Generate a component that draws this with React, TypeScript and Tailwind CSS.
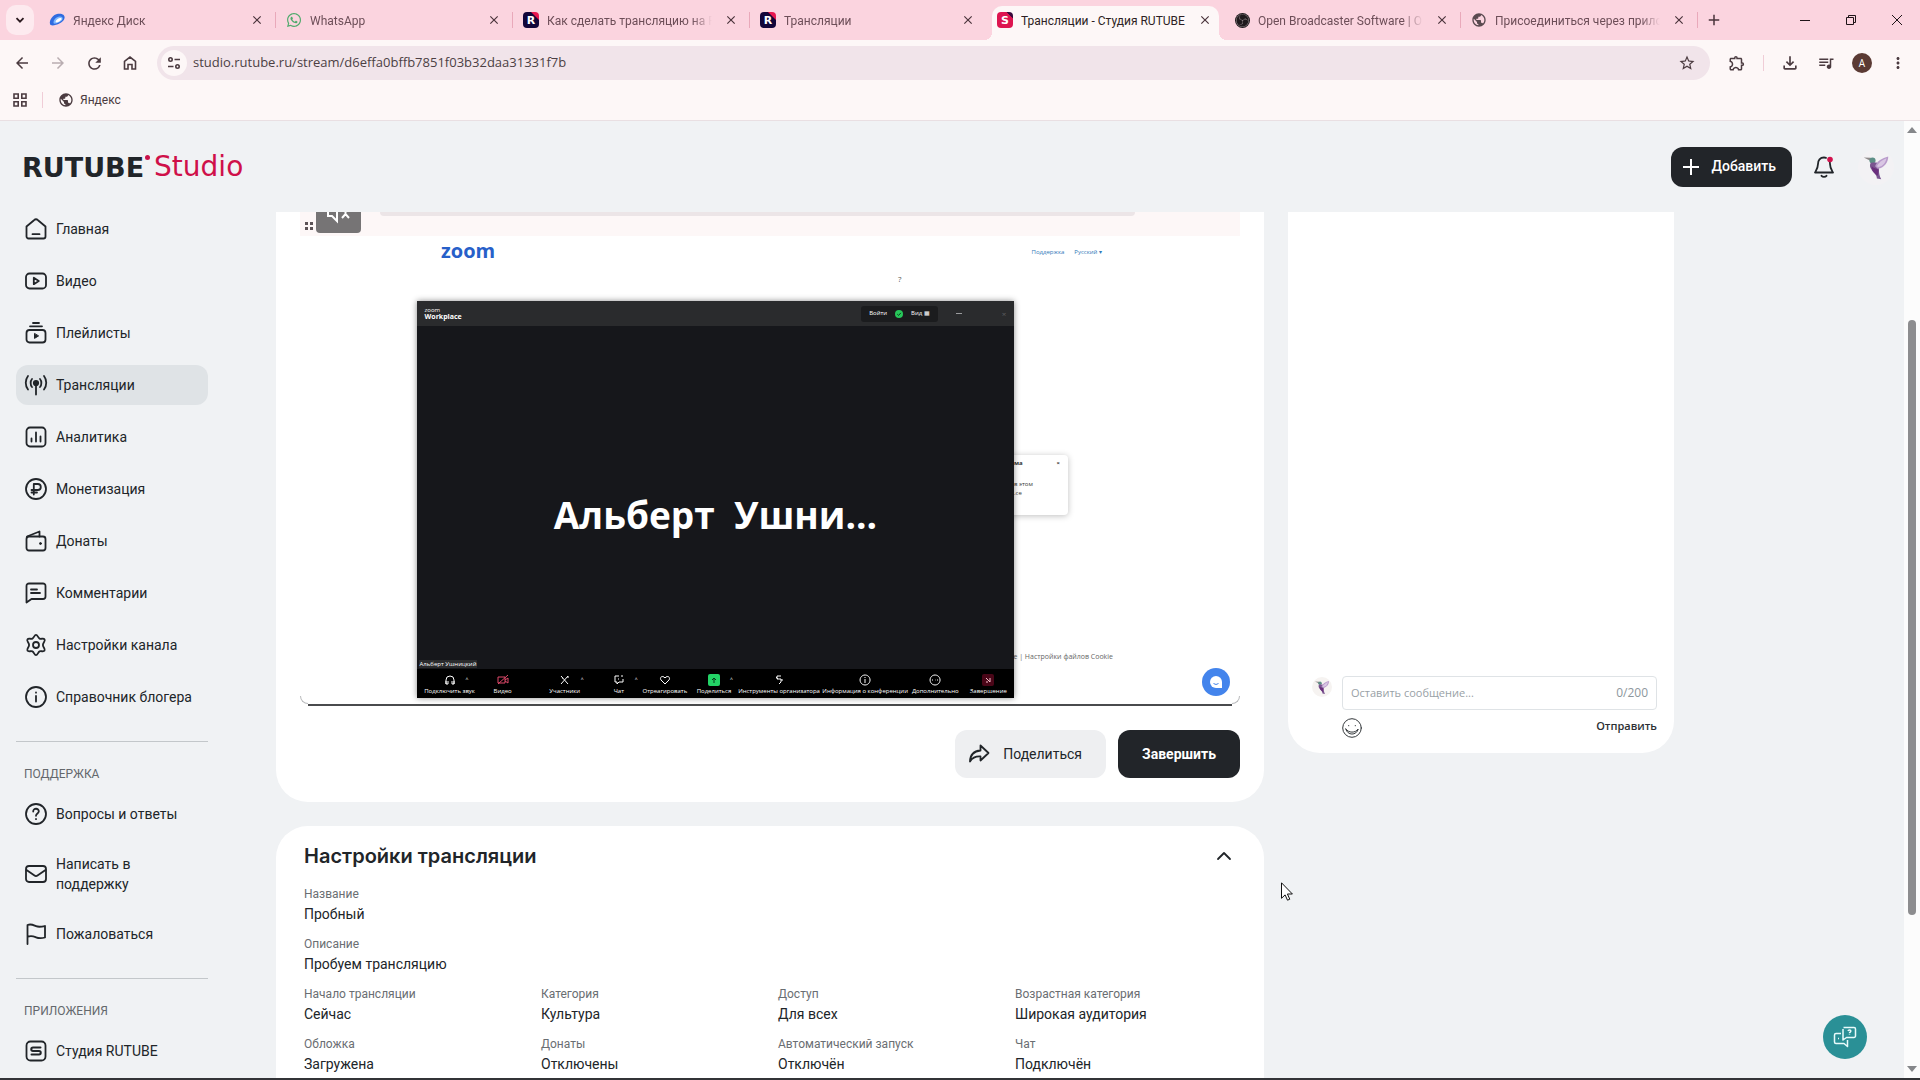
import type { ReactNode } from 'react'
import clsx from 'clsx'
import { FaWhatsapp } from 'react-icons/fa'
import { SiObsstudio } from 'react-icons/si'
import {
  MdAdd,
  MdArrowBack,
  MdArrowForward,
  MdClose,
  MdMoreVert,
  MdOutlineFileDownload,
  MdOutlineExtension,
  MdPublic,
  MdQueueMusic,
  MdRefresh,
  MdStarBorder,
} from 'react-icons/md'

const ui = "font-['Open_Sans','Noto_Sans',sans-serif]"

function Favicon({ letter }: { letter: 'R' | 'S' }) {
  return (
    <span
      className={clsx(
        "flex h-4 w-4 items-center justify-center rounded-[4px] font-['DejaVu_Sans',sans-serif] text-[11px] leading-none font-bold text-white",
        letter === 'R'
          ? 'bg-[linear-gradient(225deg,#e8174f_0_24%,#12063a_26%)]'
          : 'bg-[linear-gradient(225deg,#3a0a3c_0_20%,#dd1550_22%)]'
      )}
    >
      {letter}
    </span>
  )
}

function DiskIcon() {
  return (
    <svg viewBox="0 0 16 16" className="h-4 w-4">
      <path d="M1 12C0 8 4 2.600 9 1.800c4-.6 7 1 6.600 4C15 10 10 12 7 12.800 4 13.700 1.500 13.800 1 12z" fill="#2f6be0" />
      <path d="M4.500 10.500c0-3 2.800-5.500 6-6 2.200-.3 3.600.8 3.100 2.600C12.800 9.600 9 11 7 11.500c-1.500.3-2.500.2-2.500-1z" fill="#7db8ff" />
      <path d="M6.500 10c.3-2 2.200-3.600 4.500-4 1.300-.1 2 .6 1.500 1.600C11.500 9.200 9 10.300 7.500 10.600z" fill="#fff" />
    </svg>
  )
}

function ObsIcon() {
  return (
    <span className="flex h-[15px] w-[15px] items-center justify-center rounded-full bg-[#1f1a1d]">
      <SiObsstudio className="h-[13px] w-[13px] text-[#8b8085]" />
    </span>
  )
}

const tabs = [
  { title: 'Яндекс Диск', icon: <DiskIcon /> },
  { title: 'WhatsApp', icon: <FaWhatsapp className="h-4 w-4 text-[#4faa6c]" /> },
  { title: 'Как сделать трансляцию на RUTUBE', icon: <Favicon letter="R" /> },
  { title: 'Трансляции', icon: <Favicon letter="R" /> },
  { title: 'Трансляции - Студия RUTUBE', icon: <Favicon letter="S" />, active: true },
  { title: 'Open Broadcaster Software | OBS', icon: <ObsIcon /> },
  { title: 'Присоединиться через приложение', icon: <MdPublic className="h-[18px] w-[18px] text-[#5a4a50]" /> },
]

function TabStrip() {
  return (
    <div className="flex h-10 shrink-0 items-center bg-[#fbd4df] pl-[6px]">
      <button aria-label="Поиск вкладок" className="mr-[5px] flex h-[30px] w-7 items-center justify-center rounded-[10px] bg-[#fdeaef]">
        <svg viewBox="0 0 12 12" className="h-3 w-3" fill="none" stroke="#2a1a1f" strokeWidth="1.8">
          <path d="M2.500 4.200 6 7.700l3.500-3.500" />
        </svg>
      </button>
      {tabs.map(({ title, icon, active }, i) => (
        <div key={i} className="relative flex h-full w-[237px] min-w-0 items-center">
          {active && (
            <div className="absolute inset-x-[5px] top-[6px] bottom-0 rounded-t-[10px] bg-[#fdf7f7]">
              <span className="absolute bottom-0 -left-2 h-2 w-2 bg-[radial-gradient(circle_at_0_0,transparent_8px,#fdf7f7_8px)]" />
              <span className="absolute -right-2 bottom-0 h-2 w-2 bg-[radial-gradient(circle_at_100%_0,transparent_8px,#fdf7f7_8px)]" />
            </div>
          )}
          <div className="relative flex w-full items-center pr-3 pl-[10px]">
            <span className="flex w-4 shrink-0 items-center justify-center">{icon}</span>
            <span
              className={clsx(
                "ml-2 min-w-0 flex-1 overflow-hidden pt-px font-['Roboto',sans-serif] text-[12px] leading-5 whitespace-nowrap",
                active ? 'text-[#2e1f24]' : 'text-[#6d4e58] [mask-image:linear-gradient(90deg,#000_88%,transparent)]'
              )}
            >
              {title}
            </span>
            <button aria-label="Закрыть вкладку" className="ml-3 text-[#4a333b]">
              <MdClose className="h-[14px] w-[14px]" />
            </button>
          </div>
          {!active && i !== 3 && <span className="absolute right-0 h-4 w-px bg-[#e9a9ba]" />}
        </div>
      ))}
      <button aria-label="Новая вкладка" className="ml-[7px] text-[#4a333b]">
        <MdAdd className="h-[18px] w-[18px]" />
      </button>
      <div className="ml-auto flex items-center text-[#1f1418]">
        <button aria-label="Свернуть" className="flex w-[46px] justify-center">
          <span className="h-px w-[10px] bg-[#1f1418]" />
        </button>
        <button aria-label="Восстановить" className="flex w-[46px] justify-center">
          <svg viewBox="0 0 12 12" className="h-3 w-3" fill="none" stroke="currentColor">
            <path d="M1.500 3.500h7v7h-7zM3.500 3.500v-2h7v7h-2" />
          </svg>
        </button>
        <button aria-label="Закрыть" className="flex w-[46px] justify-center">
          <svg viewBox="0 0 12 12" className="h-3 w-3" stroke="currentColor">
            <path d="M1 1l10 10M11 1 1 11" />
          </svg>
        </button>
      </div>
    </div>
  )
}

function Toolbar() {
  return (
    <div className="flex h-[46px] shrink-0 items-center bg-[#fdf7f7] pl-1 text-[#4b3b40]">
      <button aria-label="Назад" className="flex w-9 justify-center"><MdArrowBack className="h-[18px] w-[18px]" /></button>
      <button aria-label="Вперёд" className="flex w-9 justify-center text-[#b9adb1]"><MdArrowForward className="h-[18px] w-[18px]" /></button>
      <button aria-label="Обновить" className="flex w-9 justify-center"><MdRefresh className="h-[19px] w-[19px]" /></button>
      <button aria-label="Домой" className="flex w-9 justify-center">
        <svg viewBox="0 0 16 16" className="h-4 w-4" fill="none" stroke="currentColor" strokeWidth="1.600">
          <path d="M2.500 6.300 8 2l5.500 4.300V14H10V9.500H6V14H2.500z" />
        </svg>
      </button>
      <div className="ml-[9px] flex h-[34px] flex-1 items-center rounded-full bg-[#f1e4ea] pr-[14px] pl-1">
        <button aria-label="Сведения о сайте" className="flex h-[26px] w-[26px] items-center justify-center rounded-full bg-[#fdf7f7]">
          <svg viewBox="0 0 16 16" className="h-4 w-4" fill="none" stroke="currentColor" strokeWidth="1.600">
            <circle cx="4.500" cy="4.500" r="1.700" />
            <path d="M8.500 4.500H14M2 11.500h5.500" />
            <circle cx="11.500" cy="11.500" r="1.700" />
          </svg>
        </button>
        <input
          aria-label="Адресная строка"
          className="ml-[6px] min-w-0 flex-1 bg-transparent text-[13px] text-[#4c3f44] outline-none"
          defaultValue="studio.rutube.ru/stream/d6effa0bffb7851f03b32daa31331f7b"
        />
        <button aria-label="Добавить в закладки"><MdStarBorder className="h-[18px] w-[18px]" /></button>
      </div>
      <button aria-label="Расширения" className="ml-[9px] flex w-9 justify-center"><MdOutlineExtension className="h-[18px] w-[18px]" /></button>
      <span className="mx-2 h-4 w-px bg-[#f0cdd7]" />
      <button aria-label="Загрузки" className="flex w-9 justify-center"><MdOutlineFileDownload className="h-5 w-5" /></button>
      <button aria-label="Управление медиа" className="flex w-9 justify-center"><MdQueueMusic className="h-[18px] w-[18px]" /></button>
      <button aria-label="Профиль" className="flex w-9 justify-center">
        <span className="flex h-5 w-5 items-center justify-center rounded-full bg-[#5b3a34] text-[10px] text-white">A</span>
      </button>
      <button aria-label="Меню" className="mr-1 flex w-9 justify-center"><MdMoreVert className="h-[18px] w-[18px]" /></button>
    </div>
  )
}

function Bookmarks() {
  return (
    <div className="flex h-[35px] shrink-0 items-start border-b border-[#e9dfe2] bg-[#fdf7f7] pt-1 pl-3 text-[#4b3b40]">
      <button aria-label="Приложения" className="flex h-5 w-4 items-center">
        <svg viewBox="0 0 16 16" className="h-4 w-4" fill="none" stroke="currentColor" strokeWidth="1.600">
          <path d="M2 2h4.200v4.200H2zM9.800 2H14v4.200H9.800zM2 9.800h4.200V14H2zM9.800 9.800H14V14H9.800z" />
        </svg>
      </button>
      <span className="mt-[2px] ml-[14px] h-4 w-px bg-[#f0cdd7]" />
      <a href="#yandex" className="ml-[15px] flex h-5 items-center gap-[6px] font-['Roboto',sans-serif] text-[12px]">
        <MdPublic className="h-4 w-4" />
        Яндекс
      </a>
    </div>
  )
}

function Bird({ className }: { className: string }) {
  return (
    <svg viewBox="0 0 32 32" className={className}>
      <path d="M2 5 10 5.500 10 9z" fill="#8f8a8a" />
      <circle cx="12" cy="8.500" r="3.500" fill="#5d8f86" />
      <path d="M10 11c4 0 8-1 9 2 1 5-1 9 3 17l-5-1c0-5-4-6-6-10-1-2-3-4-1-8z" fill="#7a5590" />
      <path d="M15 15C17 9 23 6 30 4c0 6-4 13-12 14z" fill="#b99bcb" />
      <path d="M17 15c2-4 6-7 11-9-1 5-4 9-9 10z" fill="#d9c6e3" />
      <path d="M11 15c2 2 6 3 8 4l-1 7c-4-3-7-6-7-11z" fill="#6b2f7d" />
    </svg>
  )
}

function Icon({ children }: { children: ReactNode }) {
  return (
    <svg viewBox="0 0 24 24" className="h-6 w-6 shrink-0" fill="none" stroke="currentColor" strokeWidth="1.800" strokeLinecap="round" strokeLinejoin="round">
      {children}
    </svg>
  )
}

type NavItem = { label: string; icon: ReactNode; active?: boolean }

const mainNav: NavItem[] = [
  {
    label: 'Главная',
    icon: <path d="M2.500 9.500 10 3.200a3 3 0 0 1 4 0l7.500 6.300V19.500a2 2 0 0 1-2 2h-15a2 2 0 0 1-2-2zM8.500 17.200h7" />,
  },
  {
    label: 'Видео',
    icon: (
      <>
        <rect x="2" y="4.500" width="20" height="15" rx="3.500" />
        <path d="M9.800 8.800v6.400l5-3.200z" />
      </>
    ),
  },
  {
    label: 'Плейлисты',
    icon: (
      <>
        <path d="M9 2h6M6 5.300h12" />
        <rect x="2.500" y="9" width="19" height="12.500" rx="3" />
        <path d="M10.500 12.800v4.600l3.800-2.300z" fill="currentColor" strokeWidth="1" />
      </>
    ),
  },
  {
    label: 'Трансляции',
    active: true,
    icon: (
      <>
        <circle cx="12" cy="10" r="2.200" fill="currentColor" />
        <path d="M12 12v9.500M8 14c-1.800-2-1.800-6 0-8M16 14c1.800-2 1.800-6 0-8M4 16.500C1 12.500 1 7 4 3M20 16.500c3-4 3-9.500 0-13.500" />
      </>
    ),
  },
  {
    label: 'Аналитика',
    icon: (
      <>
        <rect x="2.500" y="2.500" width="19" height="19" rx="3.500" />
        <path d="M7.500 13.500v3M12 7.500v9M16.500 11.500v5" />
      </>
    ),
  },
  {
    label: 'Монетизация',
    icon: (
      <>
        <circle cx="12" cy="12" r="10" />
        <path d="M9.800 17.500V7h4a3 3 0 0 1 0 6H7.500M7.500 15.500h5.500" />
      </>
    ),
  },
  {
    label: 'Донаты',
    icon: (
      <>
        <rect x="2.500" y="7.500" width="19" height="14" rx="2.500" />
        <path d="M3 7.500 15.500 2.500v5" />
        <circle cx="16.500" cy="14.500" r="1" fill="currentColor" strokeWidth="1" />
      </>
    ),
  },
  {
    label: 'Комментарии',
    icon: <path d="M2.500 21.500V5a2.500 2.500 0 0 1 2.500-2.500h14A2.500 2.500 0 0 1 21.500 5v10.500A2.500 2.500 0 0 1 19 18H7.500zM7 8.500h6M7 12h9" />,
  },
  {
    label: 'Настройки канала',
    icon: (
      <>
        <path d="M12 1.800c1.600 0 2 3 3.600 3.800 1.600.8 4-.8 5 .8s-1.700 3.400-1.700 5.600 2.700 4 1.700 5.600-3.400 0-5 .8c-1.600.8-2 3.800-3.600 3.800s-2-3-3.600-3.800c-1.600-.8-4 .8-5-.8s1.700-3.400 1.700-5.600S2.400 8 3.400 6.400s3.400 0 5-.8C10 4.800 10.400 1.800 12 1.800z" />
        <circle cx="12" cy="12" r="3" />
      </>
    ),
  },
  {
    label: 'Справочник блогера',
    icon: (
      <>
        <circle cx="12" cy="12" r="10" />
        <path d="M12 11v5.500M12 7.500v.2" />
      </>
    ),
  },
]

const supportNav: NavItem[] = [
  {
    label: 'Вопросы и ответы',
    icon: (
      <>
        <circle cx="12" cy="12" r="10" />
        <path d="M9.200 9.500c0-3.800 5.800-3.500 5.600 0-.1 2-2.800 2-2.800 4.300M12 17v.2" />
      </>
    ),
  },
  {
    label: 'Написать в поддержку',
    icon: (
      <>
        <rect x="2" y="4" width="20" height="16" rx="3" />
        <path d="m2.500 8 8 5.500a2.500 2.500 0 0 0 3 0l8-5.500" />
      </>
    ),
  },
  { label: 'Пожаловаться', icon: <path d="M3.500 22V3c4-1.500 6 .2 8.500 1.200 3 1.200 5.500.6 9-.2v11.500c-4 1-6.500.8-9-.2-2.500-1-4.500-2-8.500-.5" /> },
]

const appsNav: NavItem[] = [
  {
    label: 'Студия RUTUBE',
    icon: (
      <>
        <rect x="2.500" y="2.500" width="19" height="19" rx="4" />
        <path d="M16.500 8.500H9A1.500 1.500 0 0 0 9 12h6a1.500 1.500 0 0 1 0 3.500H7.500" strokeWidth="2" />
      </>
    ),
  },
]

function NavList({ items }: { items: NavItem[] }) {
  return (
    <ul className="flex flex-col gap-3">
      {items.map(({ label, icon, active }) => (
        <li key={label}>
          <a
            href="#nav"
            className={clsx('flex min-h-10 items-center gap-2 rounded-xl py-2 pr-4 pl-2 text-[14px] leading-5', active && 'bg-[#dfe3e6]')}
          >
            <Icon>{icon}</Icon>
            <span className="max-w-[140px]">{label}</span>
          </a>
        </li>
      ))}
    </ul>
  )
}

function NavHeading({ children }: { children: ReactNode }) {
  return <h2 className="mt-6 flex h-[53px] items-center border-t border-[#c3c7ca] px-2 pt-3 text-[12px] text-[#64686c] uppercase">{children}</h2>
}

function Sidebar() {
  return (
    <aside className="w-56 shrink-0 px-4 text-[#212529]">
      <a href="#home" className="flex h-[88px] items-center pt-1 pl-1.5 font-['DejaVu_Sans',sans-serif] whitespace-nowrap">
        <span className="text-[27px] leading-none font-bold">RUTUBE</span>
        <span className="mb-5 ml-px h-[5px] w-[5px] shrink-0 rounded-full bg-[#c9114a]" />
        <span className="ml-1 text-[28px] leading-none text-[#cf1049]">Studio</span>
      </a>
      <nav>
        <NavList items={mainNav} />
        <NavHeading>Поддержка</NavHeading>
        <NavList items={supportNav} />
        <NavHeading>Приложения</NavHeading>
        <NavList items={appsNav} />
      </nav>
    </aside>
  )
}

function Header() {
  return (
    <header className="flex h-[91px] shrink-0 items-center justify-end pr-[10px] text-[#212529]">
      <button className="flex h-10 items-center gap-3 rounded-xl bg-[#222529] pr-4 pl-[11px] text-[14px] font-medium text-white">
        <svg viewBox="0 0 18 18" className="h-[18px] w-[18px]" stroke="currentColor" strokeWidth="2">
          <path d="M9 1v16M1 9h16" />
        </svg>
        Добавить
      </button>
      <button aria-label="Уведомления" className="mr-[22px] ml-5">
        <Icon>
          <path d="M12 2.500c-4 0-6 2.800-6 6.500 0 4-1.200 5.500-3 8.500h18c-1.800-3-3-4.500-3-8.500 0-1-.1-2-.5-2.800M12 2.500c1 0 1.500.1 2 .3M9.500 20.800c1.200 1.400 3.800 1.400 5 0" />
          <circle cx="18" cy="4.500" r="2.800" fill="#d3124d" stroke="none" />
        </Icon>
      </button>
      <button aria-label="Профиль канала" className="flex h-9 w-9 items-center justify-center rounded-full bg-[#f3f2f4]">
        <Bird className="h-7 w-7" />
      </button>
    </header>
  )
}

const zoomTools = [
  { label: 'Подключить звук', path: 'M2 10V6a4 4 0 0 1 8 0v4M2 7v3h2V7M8 7v3h2V7', caret: true },
  { label: 'Видео', path: 'M1 3h7v6H1zM8 6l3-2v5L8 7M1 10 11 1', tone: 'text-[#e0486a]' },
  { label: 'Участники', path: 'M2 2l7 8M9 2 2 10M3 4h1M8 3h2', caret: true },
  { label: 'Чат', path: 'M6 2H2v6h2v2l2-2h4V5M9 1v2M5 5h1', caret: true },
  { label: 'Отреагировать', path: 'M6 10 2 6c-2-3 2-5 4-2 2-3 6-1 4 2z' },
  { label: 'Поделиться', path: 'M6 9V4M4 6l2-2 2 2', tone: 'rounded-[2px] bg-[#23d366] text-[#08381b]', caret: true },
  { label: 'Инструменты организатора', path: 'M8 2H4v3h4v3L6 10M3 3l2 2M8 6h2' },
  { label: 'Информация о конференции', path: 'M6 1a5 5 0 1 0 .1 0M6 5v4M6 3v1' },
  { label: 'Дополнительно', path: 'M6 1a5 5 0 1 0 .1 0M3 6h1M6 6h.500M8 6h1' },
  { label: 'Завершение', path: 'M4 4l4 4M8 4v4M4 8h2', tone: 'rounded-[2px] bg-[#4a0618] text-[#f7c4cf]' },
]

function ZoomWindow() {
  return (
    <div className="absolute top-[89px] left-[12.4%] flex h-[397px] w-[63.6%] flex-col bg-[#16171b] shadow-[0_0_6px_rgba(0,0,0,0.45)]">
      <div className="flex h-[25px] items-center bg-[#2a2b2d] pr-2 pl-2 text-white">
        <div className="text-[7px] leading-[7px] font-bold">
          <div className="text-[6px] leading-[6px] font-normal">zoom</div>
          Workplace
        </div>
        <div className="mr-[18px] ml-auto flex h-4 items-center gap-2 rounded-[3px] bg-[#1b1c1e] px-2 text-[6px]">
          <span>Войти</span>
          <svg viewBox="0 0 8 8" className="h-2 w-2">
            <circle cx="4" cy="4" r="4" fill="#27c75a" />
            <path d="M2.300 4.200 3.600 5.400 5.800 2.900" fill="none" stroke="#0b3d1b" />
          </svg>
          <span>Вид ▦</span>
        </div>
        <span className="mr-10 h-px w-[6px] bg-[#9a9b9d]" />
        <span className="text-[8px] text-[#5c5d60]">×</span>
      </div>
      <div className="flex flex-1 items-center justify-center pt-[42px] text-[37px] leading-none font-bold whitespace-pre text-white">
        Альберт  Ушни...
      </div>
      <div className="px-[2px] text-[6px] leading-[9px] text-white">
        <span className="bg-[#2a2b2d] px-px">Альберт Ушницкий</span>
      </div>
      <div className="grid h-[29px] grid-cols-[66fr_40fr_84fr_24fr_68fr_30fr_100fr_72fr_68fr_38fr_7fr] bg-black text-white">
        {zoomTools.map(({ label, path, tone, caret }) => (
          <div key={label} className="relative flex min-w-0 flex-col items-center pt-[5px]">
            <svg viewBox="0 0 12 12" className={clsx('h-3 w-3', tone)} fill="none" stroke="currentColor">
              <path d={path} />
            </svg>
            {caret && <span className="absolute top-2 left-1/2 ml-4 text-[5px] leading-none">^</span>}
            <span className="mt-[2px] text-[6px] leading-[6px] whitespace-nowrap">{label}</span>
          </div>
        ))}
      </div>
    </div>
  )
}

function StreamPreview() {
  return (
    <div className="mx-6 bg-white">
      <div className={clsx('relative h-[492px]', ui)}>
        <div className="h-6 bg-[#fdf7f7]">
          <div className="mr-[105px] ml-20 h-1 rounded-b-full bg-[#ece5e7]" />
        </div>
        <svg viewBox="0 0 8 8" className="absolute top-[10px] left-[5px] h-2 w-2" fill="#5c5356">
          <path d="M0 0h3v3H0zM5 0h3v3H5zM0 5h3v3H0zM5 5h3v3H5z" />
        </svg>
        <button aria-label="Включить звук" className="absolute top-0 left-4 flex h-[21px] w-[45px] justify-center overflow-hidden rounded-b-[4px] bg-[#767475]">
          <svg viewBox="0 0 28 12" className="h-3 w-7" fill="none" stroke="#fff" strokeWidth="2">
            <path d="M3 0v4h4l5 5V0M17 6l3.500-4L24 6M20.500 2V0" />
          </svg>
        </button>
        <span className="absolute top-[27px] left-[141px] text-[20px] leading-6 font-bold text-[#2760c9]">zoom</span>
        <div className="absolute top-[36px] right-[138px] flex gap-[10px] text-[6px] leading-2 text-[#2f78b8]">
          <span>Поддержка</span>
          <span>Русский ▾</span>
        </div>
        <span className="absolute top-[63px] left-[598px] text-[8px] leading-2 text-[#555]">?</span>
        <div className="absolute top-[243px] right-[172px] h-[60px] w-[70px] rounded-[4px] bg-white pt-[4px] pl-4 text-[6px] leading-[9px] text-[#333] shadow-[0_1px_6px_rgba(0,0,0,0.25)]">
          <div className="mb-3 flex justify-between pr-2 font-bold">
            <span>ма</span>
            <span>×</span>
          </div>
          в этом
          <br />
          .ce
        </div>
        <div className="absolute right-[127px] bottom-[43px] text-[7px] leading-2 whitespace-nowrap text-[#666]">ie | Настройки файлов Cookie</div>
        <ZoomWindow />
        <svg viewBox="0 0 28 28" className="absolute right-[10px] bottom-2 h-7 w-7">
          <circle cx="14" cy="14" r="14" fill="#4384ec" />
          <path d="M8 14a6 6 0 0 1 12 0v6h-6a6 6 0 0 1-6-6z" fill="#fff" />
          <path d="M11.500 15.500q2.500 2 5 0" fill="none" stroke="#4384ec" />
        </svg>
        {/* rounded player corners */}
        <span className="absolute bottom-0 left-0 h-2 w-2 rounded-bl-lg border-b border-l border-[#b9babc]" />
        <span className="absolute right-0 bottom-0 h-2 w-2 rounded-br-lg border-r border-b border-[#b9babc]" />
      </div>
      <div className="mx-2 h-[2px] bg-[#4a4b4d]" />
    </div>
  )
}

const details = [
  ['Начало трансляции', 'Сейчас'],
  ['Категория', 'Культура'],
  ['Доступ', 'Для всех'],
  ['Возрастная категория', 'Широкая аудитория'],
  ['Обложка', 'Загружена'],
  ['Донаты', 'Отключены'],
  ['Автоматический запуск', 'Отключён'],
  ['Чат', 'Подключён'],
]

function Field({ label, value }: { label: string; value: string }) {
  return (
    <div>
      <dt className="text-[12px] leading-5 text-[#6a6e72]">{label}</dt>
      <dd className="text-[14px] leading-5">{value}</dd>
    </div>
  )
}

function StreamSettings() {
  return (
    <section className="mt-6 rounded-t-[32px] bg-white pr-3 pl-7 text-[#212529]">
      <div className="flex h-[58px] items-center justify-between pt-[2px]">
        <h1 className="font-['Inter',sans-serif] text-[20px] leading-6 font-semibold">Настройки трансляции</h1>
        <button aria-label="Свернуть настройки" className="mr-4">
          <Icon>
            <path d="m6 15 6-6 6 6" />
          </Icon>
        </button>
      </div>
      <dl className="grid gap-y-[10px]">
        <Field label="Название" value="Пробный" />
        <Field label="Описание" value="Пробуем трансляцию" />
        <div className="grid grid-cols-4 gap-y-[10px] pb-6">
          {details.map(([label, value]) => (
            <Field key={label} label={label} value={value} />
          ))}
        </div>
      </dl>
    </section>
  )
}

function Chat() {
  return (
    <section className={clsx('flex h-[541px] flex-col justify-end rounded-b-[32px] bg-white pr-[17px] pb-[15px] pl-6', ui)}>
      <div className="flex gap-[10px]">
        <span className="mt-px h-5 w-5 shrink-0 rounded-full bg-[#f6f3f1] p-[2px]">
          <Bird className="h-4 w-4" />
        </span>
        <div className="min-w-0 flex-1">
          <label className="flex h-[34px] items-center rounded-[4px] border border-[#dfe3e6] px-2">
            <input aria-label="Сообщение" placeholder="Оставить сообщение..." className="min-w-0 flex-1 text-[11px] outline-none placeholder:text-[#99a1a6]" />
            <span className="text-[12px] text-[#8d979d]">0/200</span>
          </label>
          <div className="mt-2 flex items-start justify-between">
            <button aria-label="Эмодзи">
              <svg viewBox="0 0 20 20" className="h-5 w-5" fill="none" stroke="#33373a" strokeLinecap="round">
                <circle cx="10" cy="10" r="9.300" />
                <path d="M3.800 11c1.500 6.800 10.800 6.800 12.400 0-2.800 4.200-9.600 4.200-12.400 0zM6.700 7.500v.3M13.300 7.500v.3" />
              </svg>
            </button>
            <button className="text-[11px] leading-4 font-semibold text-[#2c2f33]">Отправить</button>
          </div>
        </div>
      </div>
    </section>
  )
}

function Scrollbar() {
  return (
    <div className="flex w-4 shrink-0 flex-col items-center bg-[#fcfcfc] py-[6px]">
      <svg viewBox="0 0 10 6" className="h-[6px] w-[10px]" fill="#85878a"><path d="M0 6h10L5 0z" /></svg>
      <div className="flex w-full flex-1 flex-col items-center pt-[187px] pb-[151px]">
        <div className="w-2 flex-1 rounded-full bg-[#8d8d8f]" />
      </div>
      <svg viewBox="0 0 10 6" className="h-[6px] w-[10px]" fill="#85878a"><path d="M0 0h10L5 6z" /></svg>
    </div>
  )
}

export default function App() {
  return (
    <div className={clsx('relative flex h-screen flex-col overflow-hidden border-b-2 border-[#333437]', ui)}>
      <TabStrip />
      <Toolbar />
      <Bookmarks />
      <div className="flex min-h-0 flex-1 bg-[#f0f2f4] font-['Roboto',sans-serif]">
        <Sidebar />
        <div className="flex min-w-0 flex-1 flex-col">
          <Header />
          <main className="min-h-0 flex-1 overflow-hidden pl-[52px]">
            <div className="grid max-w-[1398px] grid-cols-[minmax(0,988fr)_minmax(0,386fr)] items-start gap-6">
              <div>
                <section className="rounded-b-[32px] bg-white pb-6">
                  <StreamPreview />
                  <div className="mt-6 mr-6 flex justify-end gap-3">
                    <button className="flex h-12 items-center gap-3 rounded-xl bg-[#eeeff1] pr-6 pl-3 text-[14px] text-[#212529]">
                      <Icon>
                        <path d="M13.500 3.500 21.500 11l-8 7.500v-4c-5-.3-8 1-10.500 5 .2-6.500 4-10.500 10.500-11z" />
                      </Icon>
                      Поделиться
                    </button>
                    <button className="h-12 rounded-xl bg-[#222529] px-6 text-[14px] font-bold text-white">Завершить</button>
                  </div>
                </section>
                <StreamSettings />
              </div>
              <Chat />
            </div>
          </main>
        </div>
        <Scrollbar />
      </div>

      {/* support chat launcher */}
      <button aria-label="Чат с поддержкой" className="absolute right-[53px] bottom-[19px] flex h-11 w-11 items-center justify-center rounded-full bg-[#2a9096]">
        <svg viewBox="0 0 24 24" className="h-6 w-6" fill="none" stroke="#e9fbfb" strokeWidth="1.500" strokeLinejoin="round">
          <path d="M10.500 2.500H21a1.500 1.500 0 0 1 1.500 1.500v7a1.500 1.500 0 0 1-1.500 1.500h-7.500L10 15V4M8 8.500H3A1.500 1.500 0 0 0 1.500 10v7A1.500 1.500 0 0 0 3 18.500h8l3.500 3V15M5 13.500h1M15 6c.5-1.500 3-1.200 2.800.2-.1.900-1.300.9-1.300 2M16.500 9.500v.6" />
        </svg>
      </button>
      <svg viewBox="0 0 12 19" className="absolute top-[882px] left-[1281px] h-[19px] w-3" fill="#fff" stroke="#111">
        <path d="M.5.800v15.500l3.600-3.400 2.400 5.300 2.300-1-2.400-5.200h5z" />
      </svg>
    </div>
  )
}
